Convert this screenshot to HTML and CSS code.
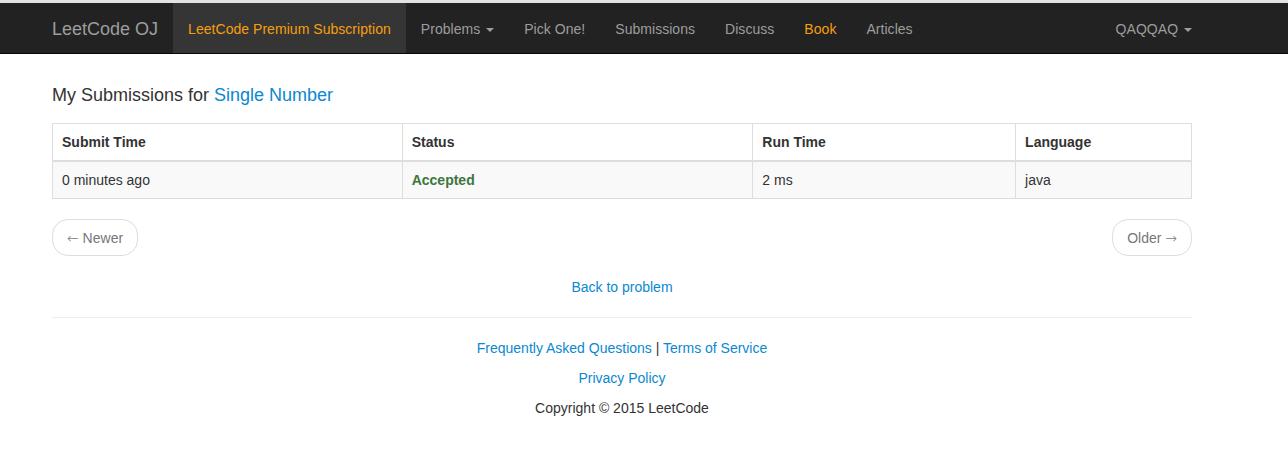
FILE: index.html
```html
<!DOCTYPE html>
<html lang="en">
<head>
<meta charset="utf-8">
<title>My Submissions - LeetCode OJ</title>
<link rel="stylesheet" href="styles.css">
</head>
<body>
<div class="topline"></div>
<nav class="navbar">
  <div class="container nav-inner">
    <a class="brand" href="#">LeetCode OJ</a>
    <ul class="nav">
      <li class="active"><a class="orange" href="#">LeetCode Premium Subscription</a></li>
      <li><a href="#">Problems <span class="caret"></span></a></li>
      <li><a href="#">Pick One!</a></li>
      <li><a href="#">Submissions</a></li>
      <li><a href="#">Discuss</a></li>
      <li><a class="orange" href="#">Book</a></li>
      <li><a href="#">Articles</a></li>
    </ul>
    <ul class="nav nav-right">
      <li><a href="#">QAQQAQ <span class="caret"></span></a></li>
    </ul>
  </div>
</nav>

<main class="container">
  <h4 class="title">My Submissions for <a href="#">Single Number</a></h4>
  <table class="table">
    <thead>
      <tr>
        <th class="c1">Submit Time</th>
        <th class="c2">Status</th>
        <th class="c3">Run Time</th>
        <th class="c4">Language</th>
      </tr>
    </thead>
    <tbody>
      <tr>
        <td>0 minutes ago</td>
        <td class="accepted">Accepted</td>
        <td>2 ms</td>
        <td>java</td>
      </tr>
    </tbody>
  </table>

  <ul class="pager">
    <li><a href="#"><span class="arrow">&larr;</span> Newer</a></li>
    <li><a href="#">Older <span class="arrow">&rarr;</span></a></li>
  </ul>

  <p class="back"><a href="#">Back to problem</a></p>

  <hr class="divider">

  <footer class="footer">
    <p><a href="#">Frequently Asked Questions</a> | <a href="#">Terms of Service</a></p>
    <p><a href="#">Privacy Policy</a></p>
    <p>Copyright &copy; 2015 LeetCode</p>
  </footer>
</main>
</body>
</html>
```

FILE: styles.css
```css
* { box-sizing: border-box; }

html, body {
  margin: 0;
  padding: 0;
  background: #fff;
}

body {
  font-family: "Liberation Sans", Arial, Helvetica, sans-serif;
  font-size: 14px;
  line-height: 20px;
  color: #333;
}

a {
  color: #0a88d0;
  text-decoration: none;
}

.topline {
  height: 3px;
  background: #e3e3e3;
}

.container {
  width: 1170px;
  margin-left: 37px;
  padding: 0 15px;
}

.navbar {
  background: #222;
  border-bottom: 1px solid #080808;
  height: 51px;
}

.nav-inner {
  display: flex;
  align-items: stretch;
  height: 50px;
  padding-left: 0;
}

.brand {
  display: block;
  font-size: 18px;
  line-height: 20px;
  padding: 16px 15px 14px 15px;
  color: #9d9d9d;
}

.nav {
  display: flex;
  list-style: none;
  margin: 0;
  padding: 0;
}

.nav li a {
  display: block;
  padding: 16px 15px 14px;
  line-height: 20px;
  color: #9d9d9d;
  letter-spacing: 0.04px;
}

.nav li.active a {
  background: #353535;
}

.nav li a.orange {
  color: #f59f10;
}

.nav-right {
  margin-left: auto;
  margin-right: -15px;
}

.caret {
  display: inline-block;
  width: 0;
  height: 0;
  margin-left: 2px;
  vertical-align: middle;
  border-top: 4px solid #9d9d9d;
  border-left: 4px solid transparent;
  border-right: 4px solid transparent;
}

.title {
  font-size: 18px;
  font-weight: 400;
  line-height: 20px;
  margin: 31px 0 18px;
  color: #333;
}

.table {
  width: 1140px;
  border-collapse: collapse;
  border: 1px solid #ddd;
}

.table th,
.table td {
  border: 1px solid #ddd;
  padding: 8px 8px 8px 9px;
  line-height: 20px;
  text-align: left;
  vertical-align: top;
}

.table th {
  font-weight: 700;
  border-bottom: 2px solid #ddd;
}

.table tbody tr {
  background: #f9f9f9;
}

.c1 { width: 350px; }
.c2 { width: 351px; }
.c3 { width: 263px; }
.c4 { width: 176px; }

.accepted {
  color: #3c763d;
  font-weight: 700;
}

.pager {
  list-style: none;
  display: flex;
  justify-content: space-between;
  margin: 20px 0 0;
  padding: 0;
}

.pager li a {
  display: block;
  padding: 8px 14px 7px 14px;
  line-height: 20px;
  border: 1px solid #ddd;
  border-radius: 16px;
  color: #777;
  background: #fff;
}

.arrow {
  font-family: "DejaVu Sans", sans-serif;
  font-size: 14px;
  line-height: 20px;
  font-weight: 200;
}

.back {
  text-align: center;
  margin: 21px 0 0;
}

.divider {
  border: 0;
  border-top: 1px solid #eee;
  margin: 20px 0 20px;
}

.footer {
  text-align: center;
}

.footer p {
  margin: 0 0 10px;
}
```
